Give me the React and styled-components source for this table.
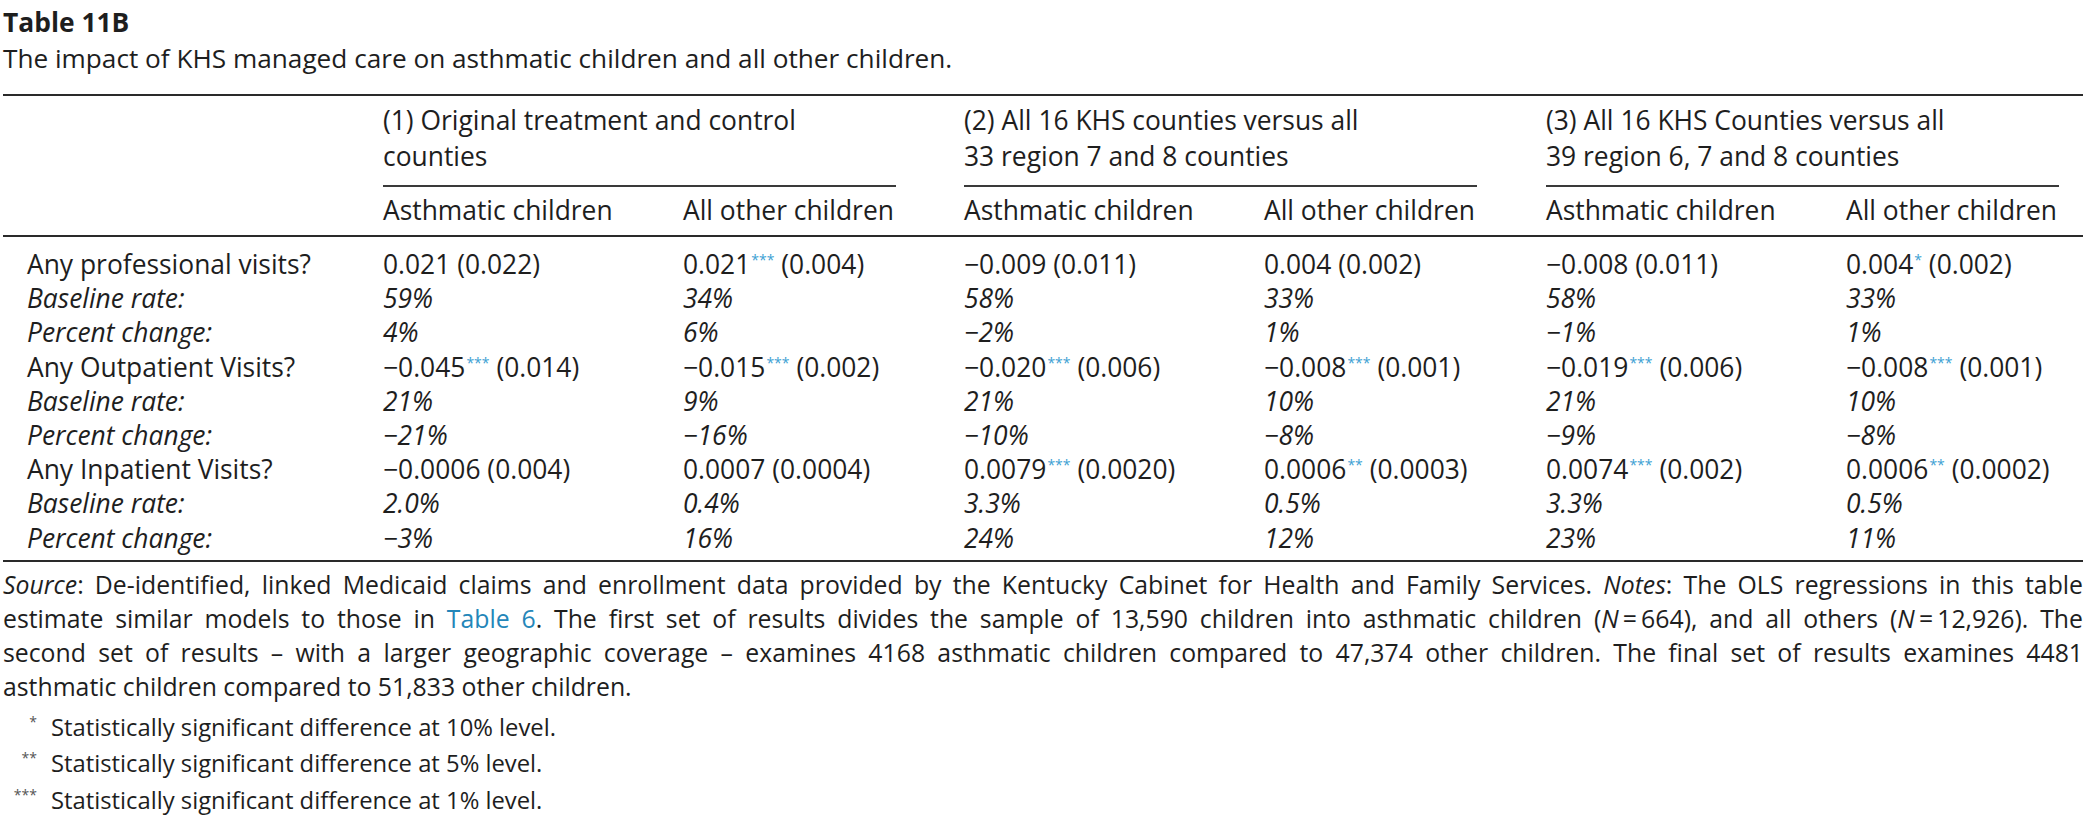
import React from "react";
import styled, { createGlobalStyle } from "styled-components";

const GlobalStyle = createGlobalStyle`
  html, body { margin: 0; padding: 0; background: #ffffff; }
  body {
    font-family: "Open Sans", "Noto Sans", "Liberation Sans", sans-serif;
    font-size: 26.4px;
    color: #1e1e1e;
  }
`;

const COLS = "380px 300px 281px 300px 282px 300px 237px";

const Page = styled.div`
  width: 2080px;
  padding: 8px 0 0 3px;
`;

const Title = styled.div`
  font-weight: 700;
  line-height: 28px;
`;

const Caption = styled.div`
  font-size: 26.2px;
  line-height: 28px;
  margin: 8px 0 22px;
`;

const Table = styled.div`
  border-top: 2px solid #2a2a2a;
  border-bottom: 2px solid #2a2a2a;
`;

const Head = styled.div`
  border-bottom: 2px solid #2a2a2a;
`;

const GridRow = styled.div`
  display: grid;
  grid-template-columns: ${COLS};
  align-items: end;
`;

const GroupRow = styled(GridRow)`
  padding-top: 6px;
  line-height: 36px;
`;

const GroupHead = styled.div`
  grid-column: span 2;
  width: 513px;
  padding-bottom: 11px;
  border-bottom: 2px solid #3a3a3a;
`;

const SubRow = styled(GridRow)`
  padding: 5px 0 7px;
  line-height: 36px;
`;

const SubHead = styled.div`
  white-space: nowrap;
`;

const Body = styled.div`
  padding: 10px 0 5px;
`;

const DataRow = styled(GridRow)`
  line-height: 34.2px;
  font-style: ${(p) => (p.$italic ? "italic" : "normal")};
`;

const Label = styled.div`
  padding-left: 24px;
  white-space: nowrap;
`;

const Cell = styled.div`
  white-space: nowrap;
`;

const Stars = styled.sup`
  font-size: 14px;
  line-height: 0;
  vertical-align: baseline;
  position: relative;
  top: -9px;
  margin-left: 1px;
  color: ${(p) => (p.$muted ? "#555555" : "#3d9fd3")};
  font-style: normal;
`;

const Notes = styled.div`
  margin-top: 5px;
  font-size: 24.8px;
  line-height: 34px;
`;

const NoteLine = styled.div`
  text-align: justify;
  text-align-last: ${(p) => (p.$last ? "left" : "justify")};
`;

const Em = styled.i`
  font-style: italic;
`;

const Ref = styled.span`
  color: #2486b9;
`;

const Footnotes = styled.div`
  margin-top: 6px;
  font-size: 23.8px;
`;

const Footnote = styled.div`
  display: grid;
  grid-template-columns: 34px 1fr;
  column-gap: 14px;
  line-height: 36.5px;
`;

const Mark = styled.div`
  text-align: right;
`;

const rows = [
  {
    label: "Any professional visits?",
    cells: [["0.021", "", "0.022"], ["0.021", "***", "0.004"], ["−0.009", "", "0.011"], ["0.004", "", "0.002"], ["−0.008", "", "0.011"], ["0.004", "*", "0.002"]],
  },
  { label: "Baseline rate:", italic: true, cells: ["59%", "34%", "58%", "33%", "58%", "33%"] },
  { label: "Percent change:", italic: true, cells: ["4%", "6%", "−2%", "1%", "−1%", "1%"] },
  {
    label: "Any Outpatient Visits?",
    cells: [["−0.045", "***", "0.014"], ["−0.015", "***", "0.002"], ["−0.020", "***", "0.006"], ["−0.008", "***", "0.001"], ["−0.019", "***", "0.006"], ["−0.008", "***", "0.001"]],
  },
  { label: "Baseline rate:", italic: true, cells: ["21%", "9%", "21%", "10%", "21%", "10%"] },
  { label: "Percent change:", italic: true, cells: ["−21%", "−16%", "−10%", "−8%", "−9%", "−8%"] },
  {
    label: "Any Inpatient Visits?",
    cells: [["−0.0006", "", "0.004"], ["0.0007", "", "0.0004"], ["0.0079", "***", "0.0020"], ["0.0006", "**", "0.0003"], ["0.0074", "***", "0.002"], ["0.0006", "**", "0.0002"]],
  },
  { label: "Baseline rate:", italic: true, cells: ["2.0%", "0.4%", "3.3%", "0.5%", "3.3%", "0.5%"] },
  { label: "Percent change:", italic: true, cells: ["−3%", "16%", "24%", "12%", "23%", "11%"] },
];

const groups = [
  ["(1) Original treatment and control", "counties"],
  ["(2) All 16 KHS counties versus all", "33 region 7 and 8 counties"],
  ["(3) All 16 KHS Counties versus all", "39 region 6, 7 and 8 counties"],
];

const footnotes = [
  ["*", "Statistically significant difference at 10% level."],
  ["**", "Statistically significant difference at 5% level."],
  ["***", "Statistically significant difference at 1% level."],
];

function Value({ v }) {
  if (typeof v === "string") return <Cell>{v}</Cell>;
  const [est, stars, se] = v;
  return (
    <Cell>
      {est}
      {stars && <Stars>{stars}</Stars>} ({se})
    </Cell>
  );
}

export default function App() {
  return (
    <>
      <GlobalStyle />
      <Page>
        <Title>Table 11B</Title>
        <Caption>The impact of KHS managed care on asthmatic children and all other children.</Caption>
        <Table>
          <Head>
            <GroupRow>
              <div />
              {groups.map(([a, b]) => (
                <GroupHead key={a}>
                  {a}
                  <br />
                  {b}
                </GroupHead>
              ))}
            </GroupRow>
            <SubRow>
              <div />
              {groups.map(([a]) => (
                <React.Fragment key={a}>
                  <SubHead>Asthmatic children</SubHead>
                  <SubHead>All other children</SubHead>
                </React.Fragment>
              ))}
            </SubRow>
          </Head>
          <Body>
            {rows.map((r, i) => (
              <DataRow key={i} $italic={r.italic}>
                <Label>{r.label}</Label>
                {r.cells.map((c, j) => (
                  <Value key={j} v={c} />
                ))}
              </DataRow>
            ))}
          </Body>
        </Table>
        <Notes>
          <NoteLine>
            <Em>Source</Em>: De-identified, linked Medicaid claims and enrollment data provided by the Kentucky Cabinet for Health and Family Services. <Em>Notes</Em>: The OLS regressions in this table
          </NoteLine>
          <NoteLine>
            estimate similar models to those in <Ref>Table 6</Ref>. The first set of results divides the sample of 13,590 children into asthmatic children (<Em>N</Em>{"\u2009=\u2009"}664), and all others (<Em>N</Em>{"\u2009=\u2009"}12,926). The
          </NoteLine>
          <NoteLine>
            second set of results – with a larger geographic coverage – examines 4168 asthmatic children compared to 47,374 other children. The final set of results examines 4481
          </NoteLine>
          <NoteLine $last>asthmatic children compared to 51,833 other children.</NoteLine>
        </Notes>
        <Footnotes>
          {footnotes.map(([m, t]) => (
            <Footnote key={m}>
              <Mark>
                <Stars $muted>{m}</Stars>
              </Mark>
              <div>{t}</div>
            </Footnote>
          ))}
        </Footnotes>
      </Page>
    </>
  );
}
